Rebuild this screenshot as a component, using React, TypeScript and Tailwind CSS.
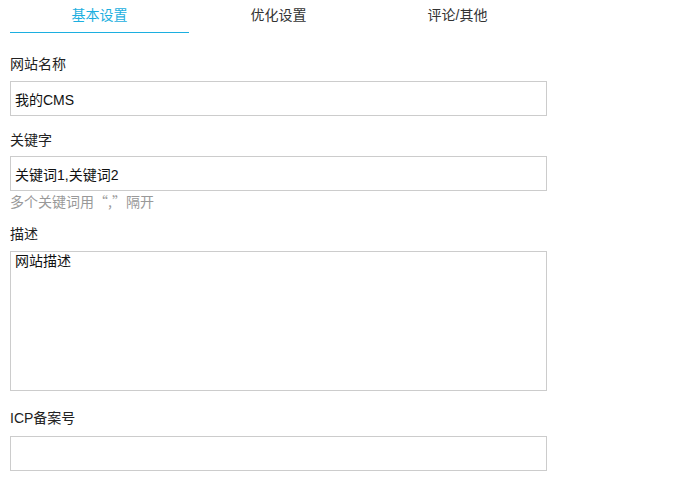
import React from 'react';

const tabs = ['基本设置', '优化设置', '评论/其他'];

const font = { fontFamily: '"Liberation Sans", "Noto Sans CJK SC", sans-serif' };
const cjk = { fontFamily: '"Noto Sans CJK SC", sans-serif' };

export default function App() {
  return (
    <div className="bg-white min-h-[482px] pl-[10px] text-[14px] text-[#222]" style={font}>
      <div className="w-[537px]">
        {/* Tabs */}
        <div className="flex">
          {tabs.map((t, i) => (
            <div
              key={t}
              className={
                i === 0
                  ? 'w-[179px] h-[33px] leading-[30px] text-center text-[#1cafe0] border-b border-[#1cafe0]'
                  : 'w-[179px] h-[33px] leading-[30px] text-center text-[#333]'
              }
            >
              {t}
            </div>
          ))}
        </div>

        {/* 网站名称 */}
        <div className="mt-[21px] leading-[20px] mb-[7px]">网站名称</div>
        <input
          className="block w-full h-[35px] border border-[#ccc] px-[4px] text-[14px] text-[#111] outline-none"
          style={font}
          defaultValue="我的CMS"
        />

        {/* 关键字 */}
        <div className="mt-[14px] leading-[20px] mb-[6px]">关键字</div>
        <input
          className="block w-full h-[35px] border border-[#ccc] px-[4px] text-[14px] text-[#111] outline-none"
          style={font}
          defaultValue="关键词1,关键词2"
        />
        <div className="leading-[20px] text-[#999]">
          多个关键词用<span style={cjk}>“,”</span>隔开
        </div>

        {/* 描述 */}
        <div className="mt-[12px] leading-[20px] mb-[7px]">描述</div>
        <textarea
          className="block w-full h-[140px] border border-[#ccc] px-[4px] pt-[1px] text-[14px] leading-[16px] text-[#111] outline-none resize-none"
          style={font}
          defaultValue="网站描述"
        />

        {/* ICP备案号 */}
        <div className="mt-[17px] leading-[20px] mb-[8px]">ICP备案号</div>
        <input
          className="block w-full h-[35px] border border-[#ccc] px-[4px] text-[14px] text-[#111] outline-none"
          style={font}
          defaultValue=""
        />
      </div>
    </div>
  );
}
